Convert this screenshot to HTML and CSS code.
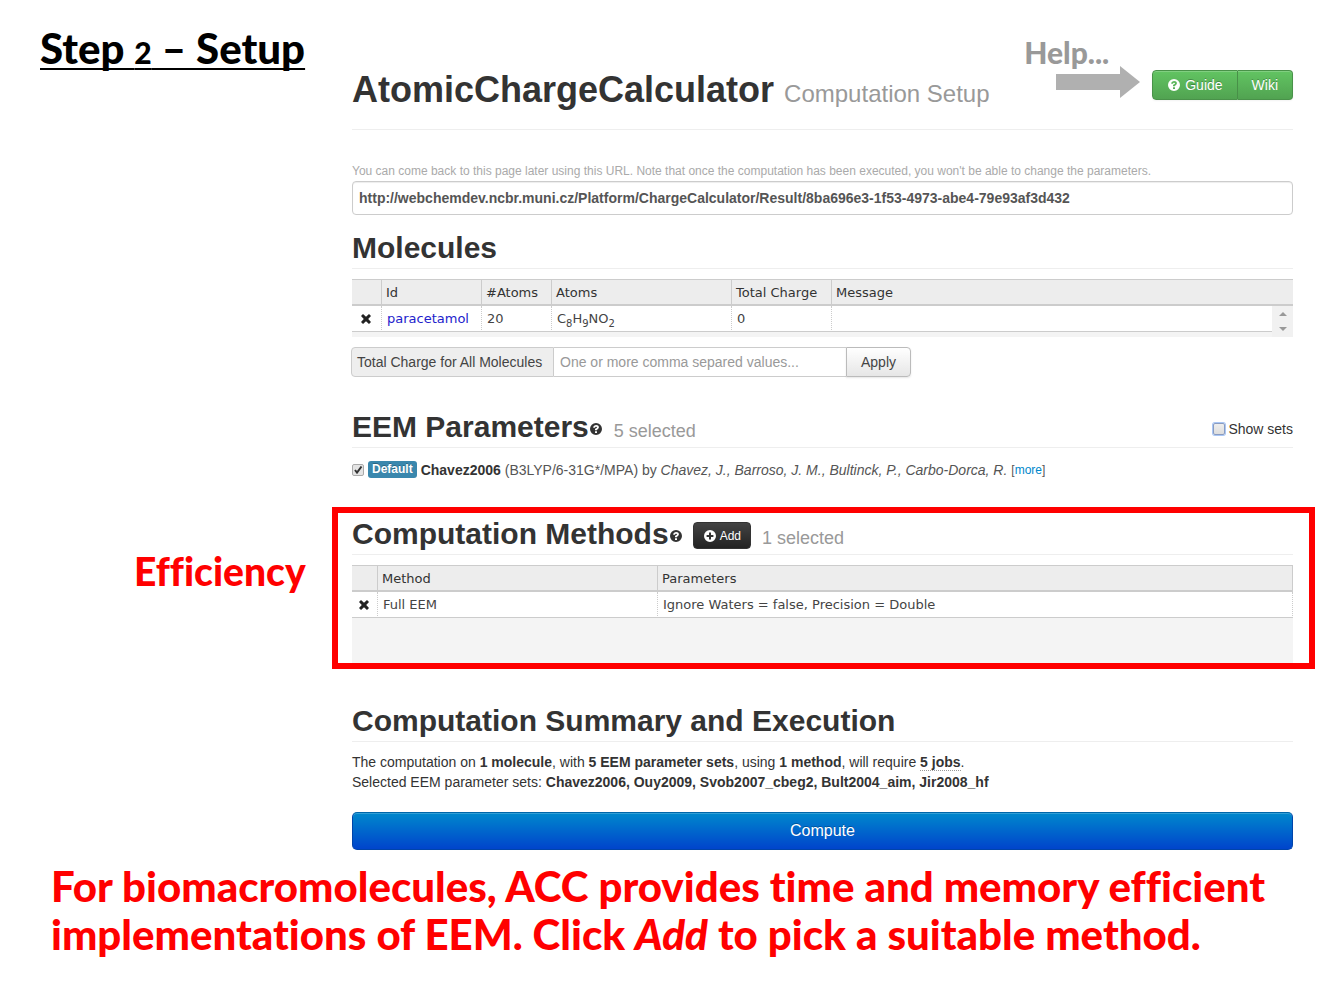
FILE: index.html
```html
<!DOCTYPE html>
<html lang="en">
<head>
<meta charset="utf-8">
<title>AtomicChargeCalculator – Computation Setup</title>
<link rel="stylesheet" href="styles.css">
</head>
<body>
<svg class="defs" aria-hidden="true">
  <symbol id="i-help" viewBox="0 0 14 14"><path fill="currentColor" fill-rule="evenodd" d="M7 1a6 6 0 1 0 0 12A6 6 0 0 0 7 1ZM6 9.200h2V11H6ZM6 8.300V7.100C6 6.300 8 6.200 8 5.400 8 4.500 6.200 4.400 6 5.800H4.200C4.200 2.200 9.900 2.200 9.900 5.300 9.900 7 8 7.100 8 8.300Z"/></symbol>
  <symbol id="i-plus" viewBox="0 0 14 14"><path fill="currentColor" fill-rule="evenodd" d="M7 1a6 6 0 1 0 0 12A6 6 0 0 0 7 1ZM6 3.600h2V6h2.400v2H8v2.400H6V8H3.600V6H6Z"/></symbol>
  <symbol id="i-remove" viewBox="0 0 12 12"><path fill="currentColor" d="M3 1 6 3.800 9 1l2 2-2.800 3L11 9 9 11 6 8.200 3 11 1 9l2.800-3L1 3Z"/></symbol>
</svg>
<div class="page">
  <div class="row">
    <div class="aside"><p class="step">Step <span class="num">2</span> – Setup</p></div>
    <header class="header">
      <h1>AtomicChargeCalculator <small>Computation Setup</small></h1>
      <div class="header-tools">
        <div class="help">
          <span>Help...</span>
          <svg class="arrow" viewBox="0 0 84 32" aria-hidden="true"><path fill="#b0b0b0" d="M0 8h64V0l20 16-20 16v-8H0Z"/></svg>
        </div>
        <nav class="btn-group">
          <a class="btn-green" href="#guide"><svg class="icon"><use href="#i-help"/></svg>Guide</a>
          <a class="btn-green" href="#wiki">Wiki</a>
        </nav>
      </div>
    </header>
  </div>

  <div class="row">
    <main class="content">
      <label class="note" for="url">You can come back to this page later using this URL. Note that once the computation has been executed, you won't be able to change the parameters.</label>
      <input class="url" id="url" type="text" readonly value="http://webchemdev.ncbr.muni.cz/Platform/ChargeCalculator/Result/8ba696e3-1f53-4973-abe4-79e93af3d432">

      <section>
        <div class="heading"><h2>Molecules</h2></div>
        <div class="grid-wrap molecules">
          <table class="grid">
            <colgroup><col class="w30"><col class="w100"><col class="w70"><col class="w180"><col class="w100"><col></colgroup>
            <thead><tr><th></th><th>Id</th><th>#Atoms</th><th>Atoms</th><th>Total Charge</th><th>Message</th></tr></thead>
            <tbody><tr><td class="act"><button class="remove" aria-label="Remove"><svg class="icon"><use href="#i-remove"/></svg></button></td><td><a class="mol" href="#paracetamol">paracetamol</a></td><td>20</td><td>C<sub>8</sub>H<sub>9</sub>NO<sub>2</sub></td><td>0</td><td></td></tr></tbody>
          </table>
          <div class="scroll" aria-hidden="true"><i class="up"></i><i class="down"></i></div>
        </div>
        <div class="input-group">
          <label for="charge">Total Charge for All Molecules</label>
          <input id="charge" type="text" placeholder="One or more comma separed values...">
          <button>Apply</button>
        </div>
      </section>

      <section class="eem">
        <div class="heading">
          <h2>EEM Parameters</h2><svg class="icon"><use href="#i-help"/></svg><span class="count">5 selected</span>
          <label class="show"><input type="checkbox" class="check focus">Show sets</label>
        </div>
        <div class="set">
          <input type="checkbox" class="check" id="set1" checked>
          <span class="badge">Default</span>
          <label for="set1"><b>Chavez2006</b> (B3LYP/6-31G*/MPA) by <em>Chavez, J., Barroso, J. M., Bultinck, P., Carbo-Dorca, R.</em></label>
          <small>[<a href="#more">more</a>]</small>
        </div>
      </section>
    </main>
  </div>

  <div class="row methods-row">
    <div class="aside"><p class="efficiency">Efficiency</p></div>
    <section class="methods">
      <div class="heading">
        <h2>Computation Methods</h2><svg class="icon"><use href="#i-help"/></svg>
        <button class="add"><svg class="icon"><use href="#i-plus"/></svg>Add</button>
        <span class="count">1 selected</span>
      </div>
      <div class="grid-wrap">
        <table class="grid closed">
          <colgroup><col class="w26"><col class="w280"><col></colgroup>
          <thead><tr><th></th><th>Method</th><th>Parameters</th></tr></thead>
          <tbody><tr><td class="act"><button class="remove" aria-label="Remove"><svg class="icon"><use href="#i-remove"/></svg></button></td><td>Full EEM</td><td>Ignore Waters = false, Precision = Double</td></tr></tbody>
        </table>
      </div>
    </section>
  </div>

  <div class="row">
    <section class="content summary">
      <div class="heading"><h2>Computation Summary and Execution</h2></div>
      <p>The computation on <b>1 molecule</b>, with <b>5 EEM parameter sets</b>, using <b>1 method</b>, will require <b class="jobs">5 jobs</b>.<br>
      Selected EEM parameter sets: <b>Chavez2006, Ouy2009, Svob2007_cbeg2, Bult2004_aim, Jir2008_hf</b></p>
      <button class="compute">Compute</button>
    </section>
  </div>

  <p class="caption">For biomacromolecules, ACC provides time and memory efficient implementations of EEM. Click <em>Add</em> to pick a suitable method.</p>
</div>
</body>
</html>
```

FILE: styles.css
```css
* { box-sizing: border-box; }
body {
  margin: 0;
  background: #fff;
  color: #333;
  font: 14px/20px "Liberation Sans", Arial, sans-serif;
}
h1, h2, p { margin: 0; }
button, input { font: inherit; }
.defs { position: absolute; width: 0; height: 0; }
.icon { width: 14px; height: 14px; flex: none; }

.page { padding: 26px 30px 0 40px; }
.row { display: grid; grid-template-columns: 312px minmax(0, 1fr); }
.content, .header { grid-column: 2; }

.step, .help, .efficiency, .caption {
  font-family: Lato, sans-serif;
  font-weight: 900;
  font-variant-ligatures: none;
}
.step {
  color: #000;
  font-size: 42px;
  line-height: 44px;
  white-space: nowrap;
  text-decoration: underline;
  text-decoration-thickness: 2px;
  text-underline-offset: 4px;
  text-decoration-skip-ink: none;
}
.num { font-size: 30px; }

.header {
  display: flex;
  justify-content: space-between;
  height: 104px;
  border-bottom: 1px solid #eee;
}
h1 { padding-top: 44px; font-size: 36px; line-height: 40px; white-space: nowrap; }
h1 small { font-size: 24px; font-weight: normal; color: #999; }
.header-tools { display: flex; gap: 12px; padding-top: 12px; }
.help { color: #999; font-size: 30px; line-height: 28px; }
.arrow { display: block; width: 84px; height: 32px; margin-left: 32px; }
.btn-group { display: flex; height: 30px; margin-top: 32px; }
.btn-green {
  display: flex;
  align-items: center;
  gap: 4px;
  padding: 0 14px;
  border: 1px solid #499249;
  color: #fff;
  text-decoration: none;
  text-shadow: 0 -1px 0 rgba(0, 0, 0, .25);
  background: linear-gradient(#62c462, #51a351);
  box-shadow: inset 0 1px 0 rgba(255, 255, 255, .2), 0 1px 2px rgba(0, 0, 0, .05);
}
.btn-green:first-child { border-radius: 4px 0 0 4px; }
.btn-green:last-child { border-radius: 0 4px 4px 0; border-left: 0; }

.note { display: block; margin-top: 31px; font-size: 12px; color: #aaa; }
.url {
  display: block;
  width: 100%;
  height: 34px;
  padding: 0 6px;
  border: 1px solid #ccc;
  border-radius: 4px;
  color: #555;
  font-weight: bold;
  box-shadow: inset 0 1px 1px rgba(0, 0, 0, .075);
}

.heading {
  display: flex;
  align-items: center;
  height: 42px;
  margin-bottom: 10px;
  border-bottom: 1px solid #eee;
}
section .heading { margin-top: 12px; }
h2 { font-size: 30px; line-height: 40px; white-space: nowrap; }
.heading > .icon { margin: 5px 0 0 0; }
.count { margin: 8px 0 0 11px; color: #999; font-size: 18px; }
.show { display: flex; align-items: center; gap: 3px; margin: 5px 0 0 auto; }

.grid-wrap { display: flex; align-items: flex-end; background: #f4f4f4; position: relative; }
.grid {
  width: 100%;
  table-layout: fixed;
  border-collapse: separate;
  border-spacing: 0;
  font: 13px/20px "DejaVu Sans", sans-serif;
}
.w26 { width: 26px; }
.w30 { width: 30px; }
.w70 { width: 70px; }
.w100 { width: 100px; }
.w180 { width: 180px; }
.w280 { width: 280px; }
.grid th {
  height: 27px;
  padding: 2px 4px 0;
  border: solid #ccc;
  border-width: 1px 1px 2px 0;
  background: #ededed;
  font-weight: normal;
  text-align: left;
  white-space: nowrap;
}
.grid td {
  height: 26px;
  padding: 0 5px;
  border: solid #ccc;
  border-width: 0 1px 1px 0;
  border-right-style: dotted;
  background: #fff;
  color: #444;
  line-height: 16px;
  white-space: nowrap;
}
.grid:not(.closed) th:last-child, .grid:not(.closed) td:last-child { border-right: 0; }
.grid sub { font-size: 10px; line-height: 0; }
.grid td.act { padding: 0 2px 0 0; text-align: center; }
.remove { display: block; margin: 0 auto; padding: 0; border: 0; background: none; color: #222; }
.remove .icon { display: block; width: 12px; height: 12px; }
.mol { color: #22c; text-decoration: none; }
.molecules { padding-bottom: 5px; }
.scroll {
  position: absolute;
  right: 0;
  bottom: 0;
  width: 21px;
  height: 31px;
  display: flex;
  flex-direction: column;
  align-items: center;
  justify-content: space-evenly;
  gap: 4px;
  background: #f1f1f1;
}
.up, .down { border: 4px solid transparent; }
.up { border-top: 0; border-bottom-color: #999; }
.down { border-bottom: 0; border-top-color: #999; }

.input-group { display: flex; height: 30px; margin: 10px 0 0 -1px; color: #444; }
.input-group label {
  min-width: 203px;
  padding: 4px 5px;
  border: 1px solid #ccc;
  border-radius: 4px 0 0 4px;
  background: #eee;
  white-space: nowrap;
}
.input-group input { width: 292px; padding: 0 6px; border: solid #ccc; border-width: 1px 0; }
.input-group input::placeholder { color: #999; }
.input-group button {
  padding: 0 14px;
  border: 1px solid #bbb;
  border-radius: 0 4px 4px 0;
  color: #444;
  background: linear-gradient(#fff, #e6e6e6);
  box-shadow: 0 1px 2px rgba(0, 0, 0, .1);
}

.eem .heading { margin-top: 29px; }
.set { display: flex; align-items: center; gap: 4px; height: 23px; color: #555; white-space: nowrap; }
.set b { color: #333; }
.set small { font-size: 12px; }
.set a { color: #08c; text-decoration: none; }
.check {
  appearance: none;
  width: 12px;
  height: 12px;
  margin: 0;
  border: 1px solid #aaa;
  border-radius: 2px;
  background: linear-gradient(#eee, #ddd);
}
.check:checked {
  background: url("data:image/svg+xml,%3Csvg xmlns='http://www.w3.org/2000/svg' viewBox='0 0 10 10'%3E%3Cpath d='M2 5l2 2.500L8.500 1.500' fill='none' stroke='%23333' stroke-width='2'/%3E%3C/svg%3E") #e4e4e4;
}
.focus { border-color: #8a9cc0; box-shadow: 0 0 0 1px #a9c6f5; }
.badge {
  padding: 0 4px;
  border-radius: 3px;
  background: #3a87ad;
  color: #fff;
  font-size: 12px;
  font-weight: bold;
  line-height: 17px;
  text-shadow: 0 -1px 0 rgba(0, 0, 0, .25);
}

.methods-row { margin-top: 26px; }
.efficiency { padding: 40px 0 0 94px; color: #f00; font-size: 39px; line-height: 48px; }
.methods { margin: 0 -22px 0 -20px; padding: 0 16px 0 14px; border: 6px solid #f00; }
.methods .heading { margin-top: 0; }
.methods .grid-wrap { padding-bottom: 45px; }
.add {
  display: flex;
  align-items: center;
  gap: 3px;
  height: 27px;
  margin: 4px 0 0 10px;
  padding: 0 9px;
  border: 1px solid #333;
  border-radius: 4px;
  background: linear-gradient(#444, #222);
  color: #fff;
  font-size: 12px;
}
.summary .heading { margin-top: 31px; }
.jobs { border-bottom: 1px dotted #999; }
.compute {
  display: block;
  width: 100%;
  height: 38px;
  margin-top: 20px;
  border: 1px solid #04a;
  border-top-color: #06a;
  border-radius: 5px;
  background: linear-gradient(#08c, #04c);
  box-shadow: inset 0 1px 0 rgba(255, 255, 255, .2);
  color: #fff;
  font-size: 16px;
  text-shadow: 0 -1px 0 rgba(0, 0, 0, .25);
}
.caption { margin: 12px 0 0 11px; padding-bottom: 30px; color: #f00; font-size: 42px; line-height: 48px; }
```
